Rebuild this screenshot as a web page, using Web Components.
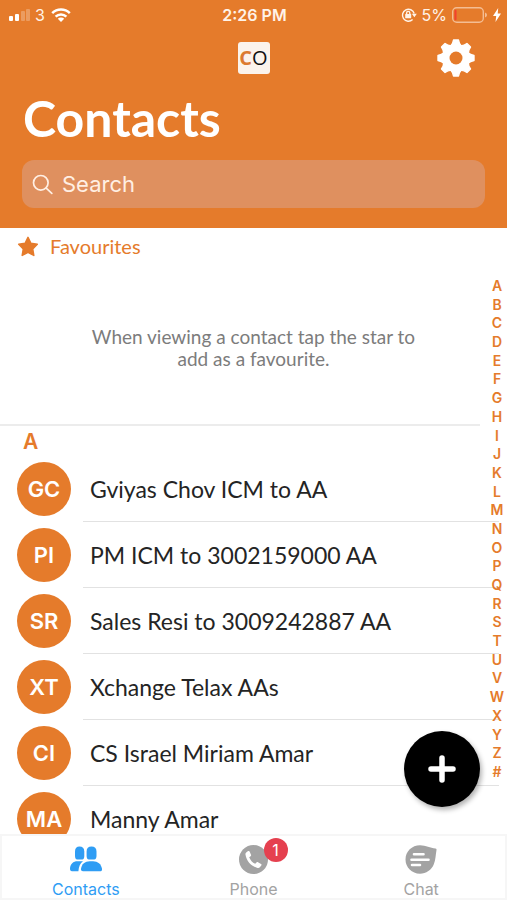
<!DOCTYPE html>
<html lang="en">
<head>
<meta charset="utf-8">
<meta name="viewport" content="width=device-width, initial-scale=1">
<title>Contacts</title>
<style>
  html, body { margin: 0; height: 100%; }
  body {
    --brand: #e57b2b;
    --active: #2f9df4;
    --muted: #a3a3a3;
    --ui: Inter, "Liberation Sans", sans-serif;
    --text: Lato, "Liberation Sans", sans-serif;
    background: #fff;
    font-family: var(--text);
  }
</style>
</head>
<body>
<contacts-app></contacts-app>

<script>
const define = (name, html, setup) => {
  const template = document.createElement('template');
  template.innerHTML = `<style>*{box-sizing:border-box}:host{box-sizing:border-box}</style>` + html;
  customElements.define(name, class extends HTMLElement {
    constructor() {
      super();
      this.attachShadow({ mode: 'open' }).append(template.content.cloneNode(true));
    }
    connectedCallback() { if (setup) setup(this, this.shadowRoot); }
  });
};

define('status-bar', `
<style>
  :host { display: grid; grid-template-columns: 1fr auto 1fr; align-items: center; height: 30px; padding: 0 6px 0 8px;
    color: #fff3e8; font: 400 16px/20px var(--ui); }
  div { display: flex; align-items: center; gap: 5px; }
  .end { justify-content: flex-end; }
  time { font-weight: 600; }
</style>
<div>
  <svg width="22" height="14" viewBox="0 0 22 14" role="img" aria-label="Signal">
    <g fill="#fff"><rect x="1" y="8" width="4" height="5" rx="1"/><rect x="7" y="6" width="4" height="7" rx="1"/></g>
    <g fill="#fff" opacity=".25"><rect x="13" y="3" width="4" height="10" rx="1"/><rect x="18" y="1" width="4" height="12" rx="1"/></g>
  </svg>
  <span>3</span>
  <svg width="22" height="16" viewBox="0 0 22 16" role="img" aria-label="Wi-Fi" fill="none" stroke="#fff" stroke-width="2.5">
    <path d="M2.2 6.2a12.6 12.6 0 0 1 17.6 0"/><path d="M5.6 9.6a7.8 7.8 0 0 1 10.8 0"/>
    <path d="M11 15l-3.2-3.2a4.6 4.6 0 0 1 6.4 0z" fill="#fff" stroke="none"/>
  </svg>
</div>
<time>2:26 PM</time>
<div class="end">
  <svg width="16" height="16" viewBox="0 0 16 16" role="img" aria-label="Rotation locked" fill="none" stroke="#fff3e8" stroke-width="1.4">
    <path d="M11.6 12.6A6 6 0 1 1 13.2 6.5"/><path d="M10.8 6.8h5l-2.4 3.4z" fill="#fff3e8" stroke="none"/>
    <rect x="4.2" y="7" width="6" height="4.2" rx=".5" fill="#fff3e8" stroke="none"/><path d="M5.6 7.2V6a1.6 1.6 0 0 1 3.2 0v1.2"/>
  </svg>
  <span>5%</span>
  <svg width="36" height="16" viewBox="0 0 36 16" role="img" aria-label="Battery low">
    <rect x=".7" y=".7" width="30.6" height="14.6" rx="4" fill="none" stroke="#f4bd93" stroke-width="1.4"/>
    <path d="M33 5.5q2 .8 2 2.5t-2 2.5z" fill="#f4bd93"/><rect x="2.5" y="2.8" width="2" height="10.4" rx="1" fill="#f2412d"/>
  </svg>
  <svg width="8" height="14" viewBox="0 0 8 14" role="img" aria-label="Charging"><path d="M5.2 0L0 8h3.2L2.5 14 8 5.6H4.7z" fill="#fff"/></svg>
</div>`);

define('app-logo', `
<style>
  :host { display: flex; justify-content: center; align-items: center; width: 32px; height: 32px; border-radius: 3px;
    background: #fbf3ec; font: 500 20px/30px "Open Sans", sans-serif; color: #111; }
  .c { color: #dc7a30; font-weight: 700; }
</style>
<span class="c">C</span><span>O</span>`);

define('search-field', `
<style>
  :host { display: block; }
  label { display: flex; align-items: center; gap: 9px; height: 48px; padding: 0 10px; border-radius: 12px; background: #df905f; }
  input { flex: 1; min-width: 0; padding: 0; border: 0; outline: 0; background: none; appearance: none; color: #fff; font: 400 22px/28px var(--ui); }
  input::placeholder { color: #ffefe3; opacity: 1; }
</style>
<label>
  <svg width="21" height="21" viewBox="0 0 21 21" fill="none" stroke="#ffefe3" stroke-width="1.7" stroke-linecap="round" aria-hidden="true">
    <circle cx="8.8" cy="8.8" r="7.3"/><path d="M14.2 14.2l5.6 5.2"/></svg>
  <input type="search" placeholder="Search" aria-label="Search contacts">
</label>`);

define('app-header', `
<style>
  :host { display: block; padding-bottom: 20px; background: var(--brand); color: #fff; }
  .bar { display: grid; grid-template-columns: 1fr auto 1fr; align-items: center; height: 56px; padding: 0 32px; }
  button { grid-column: 3; justify-self: end; display: flex; padding: 0; border: 0; background: none; cursor: pointer; }
  app-logo { grid-column: 2; }
  h1 { margin: 0; padding: 0 23px; font: 700 50px/64px var(--text); }
  search-field { margin: 10px 22px 0; }
</style>
<status-bar></status-bar>
<div class="bar">
  <app-logo></app-logo>
  <button type="button" aria-label="Settings">
    <svg width="38" height="38" viewBox="-19 -19 38 38" aria-hidden="true">
      <defs><mask id="m"><rect x="-19" y="-19" width="38" height="38" fill="#fff"/><circle r="6.5" fill="#000"/></mask></defs>
      <g fill="#fff" stroke="#fff" stroke-width="1.4" stroke-linejoin="round" mask="url(#m)">
        <circle r="13"/>
        <path id="t" d="M-5-12.5Q-3.2-14-2.5-18H2.5Q3.2-14 5-12.5z"/>
        <use href="#t" transform="rotate(45)"/><use href="#t" transform="rotate(90)"/><use href="#t" transform="rotate(135)"/>
        <use href="#t" transform="rotate(180)"/><use href="#t" transform="rotate(225)"/><use href="#t" transform="rotate(270)"/><use href="#t" transform="rotate(315)"/>
      </g>
    </svg>
  </button>
</div>
<h1>Contacts</h1>
<search-field></search-field>`);

define('favourites-panel', `
<style>
  :host { display: block; margin-right: 27px; border-bottom: 2px solid #ececec; }
  h2 { display: flex; align-items: center; gap: 11px; margin: 0; padding: 0 17px; color: var(--brand); font: 400 20px/36px var(--text); }
  p { max-width: 330px; margin: 0 auto; padding: 62px 0 54px; color: #7c7c7c; font: 400 19px/22px var(--text); text-align: center; }
  .wrap { padding-left: 27px; }
</style>
<h2><svg width="22" height="21" viewBox="0 0 22 21" fill="currentColor" stroke="currentColor" stroke-width="1.5" stroke-linejoin="round" aria-hidden="true">
  <path d="M11 1.4l2.9 5.9 6.4 1-4.6 4.6 1.1 6.5-5.8-3.1-5.8 3.1 1.1-6.5L1.7 8.3l6.4-1z"/></svg>Favourites</h2>
<div class="wrap"><p><slot></slot></p></div>`);

define('contact-row', `
<style>
  :host { display: block; }
  a { display: flex; align-items: center; height: 66px; padding-left: 17px; color: #242424; text-decoration: none; }
  .avatar { flex: none; display: grid; place-items: center; width: 54px; height: 54px; border-radius: 50%; background: var(--brand);
    color: #fff; font: 600 22px/28px var(--ui); }
  .name { flex: 1; display: flex; align-items: center; align-self: stretch; margin: 0 8px 0 12px; padding-left: 7px;
    border-bottom: 1px solid #e2e2e2; font: 400 23px/28px var(--text); }
</style>
<a href="#"><span class="avatar"></span><span class="name"><slot></slot></span></a>`,
(host, root) => { root.querySelector('.avatar').textContent = host.getAttribute('initials'); });

define('letter-heading', `
<style>
  :host { display: block; }
  h2 { margin: 0; padding: 2px 23px 0; color: var(--brand); font: 600 21px/28px var(--ui); }
</style>
<h2><slot></slot></h2>`);

define('alphabet-index', `
<style>
  :host { display: flex; flex-direction: column; justify-content: space-between; align-items: center; width: 20px; }
  a { color: var(--brand); font: 600 14px/18px var(--ui); text-decoration: none; }
</style>`,
(host, root) => {
  for (const letter of 'ABCDEFGHIJKLMNOPQRSTUVWXYZ#') {
    const a = document.createElement('a');
    a.href = '#';
    a.textContent = letter;
    root.append(a);
  }
});

define('add-button', `
<style>
  :host { display: block; }
  button { display: grid; place-items: center; width: 76px; height: 76px; padding: 0; border: 0; border-radius: 50%; background: #000;
    box-shadow: 2px 3px 5px rgba(0,0,0,.3); cursor: pointer; }
</style>
<button type="button" aria-label="Add contact">
  <svg width="28" height="28" viewBox="0 0 28 28" stroke="#fff" stroke-width="5.5" stroke-linecap="round" aria-hidden="true"><path d="M14 3v22M3 14h22"/></svg>
</button>`);

define('tab-item', `
<style>
  :host { display: block; flex: 1; color: var(--muted); }
  :host([active]) { color: var(--active); }
  a { display: flex; flex-direction: column; align-items: center; gap: 5px; padding: 8px 0 0; color: inherit; font: 400 16px/20px var(--ui); text-decoration: none; }
  .icon { position: relative; display: grid; place-items: center; width: 34px; height: 30px; }
</style>
<a href="#"><span class="icon"><slot name="icon"></slot><slot name="badge"></slot></span><slot></slot></a>`);

define('count-badge', `
<style>
  :host { position: absolute; left: 27px; top: -6px; width: 24px; height: 24px; border-radius: 50%; background: #e5404f; color: #fff;
    font: 400 16px/24px var(--ui); text-align: center; }
</style><slot></slot>`);

define('tab-bar', `
<style>
  :host { display: block; }
  nav { display: flex; height: 66px; border: 2px solid #f6f6f6; background: #fff; }
</style>
<nav aria-label="Main">
  <tab-item active>
    <svg slot="icon" width="32" height="26" viewBox="0 0 32 26" fill="currentColor" aria-hidden="true">
      <path d="M9.5.5c3 0 4.8 1.7 4.8 5.1V10c0 2-.6 3.4-2 3.4H7.2c-1.5 0-2.2-1.4-2.2-3.4V5.6C5 2.2 6.7.5 9.5.5z"/>
      <path d="M21.5.5c3.2 0 5 1.7 5 5.1V10c0 2-.8 3.4-2.3 3.4h-5.3c-1.6 0-2.3-1.4-2.3-3.4V5.6c0-3.4 1.7-5.1 4.9-5.1z"/>
      <path d="M0 22.5c.3-4.6 3.2-7.3 7.5-7.3H13c-2.9 2-4.2 5.2-4.6 10H2C.6 25.2 0 24.3 0 22.5z"/>
      <path d="M11 22.8c.6-4.8 4-7.6 8.8-7.6h3.2c4.8 0 8.2 2.8 9 7.6.2 1.6-.6 2.4-2 2.4H13c-1.4 0-2.2-.8-2-2.4z"/>
    </svg>Contacts</tab-item>
  <tab-item>
    <svg slot="icon" width="29" height="29" viewBox="0 0 29 29" aria-hidden="true">
      <circle cx="14.5" cy="14.5" r="14.5" fill="currentColor"/>
      <path d="M7.2 7.4l1.9-1.3c.6-.4 1.2-.2 1.5.4l1.4 3.2c.3.6.1 1.1-.4 1.5l-1.4 1c1.1 3 3.2 5.2 6 6.6l1.3-1.3c.4-.5 1-.6 1.5-.3l3 1.7c.6.3.7.9.3 1.5l-1.5 1.9c-.5.6-1.2.8-2.2.6C12.4 21.2 7.7 16.5 6.5 9.7c-.2-1 0-1.7.7-2.3z" fill="#fff"/>
    </svg><count-badge slot="badge">1</count-badge>Phone</tab-item>
  <tab-item>
    <svg slot="icon" width="32" height="29" viewBox="0 0 32 29" aria-hidden="true">
      <path d="M15 .3c6 0 10.2 2.9 15.5 3.3.9.1 1.1.6 1 1.3-.9 5.2-.8 9.500-2.600 14.100C26.700 25 21 28.700 15 28.700 6.900 28.700.5 22.500.5 14.500S6.900.3 15 .3z" fill="currentColor"/>
      <path d="M9 9.300h9.500M6.500 14.700h17M7 20h8" stroke="#fff" stroke-width="2.600" stroke-linecap="round"/>
    </svg>Chat</tab-item>
</nav>`);

define('contacts-app', `
<style>
  :host { display: flex; flex-direction: column; height: 100vh; }
  app-header, tab-bar { flex: none; }
  main { position: relative; flex: 1; min-height: 0; }
  .scroll { height: 100%; overflow: hidden auto; scrollbar-width: none; }
  alphabet-index { position: absolute; top: 49px; right: 0; bottom: 53px; }
  add-button { position: absolute; right: 27px; bottom: 27px; }
</style>
<app-header></app-header>
<main>
  <div class="scroll">
    <favourites-panel>When viewing a contact tap the star to add as a favourite.</favourites-panel>
    <letter-heading>A</letter-heading>
    <contact-row initials="GC">Gviyas Chov ICM to AA</contact-row>
    <contact-row initials="PI">PM ICM to 3002159000 AA</contact-row>
    <contact-row initials="SR">Sales Resi to 3009242887 AA</contact-row>
    <contact-row initials="XT">Xchange Telax AAs</contact-row>
    <contact-row initials="CI">CS Israel Miriam Amar</contact-row>
    <contact-row initials="MA">Manny Amar</contact-row>
  </div>
  <alphabet-index></alphabet-index>
  <add-button></add-button>
</main>
<tab-bar></tab-bar>`);
</script>
</body>
</html>
